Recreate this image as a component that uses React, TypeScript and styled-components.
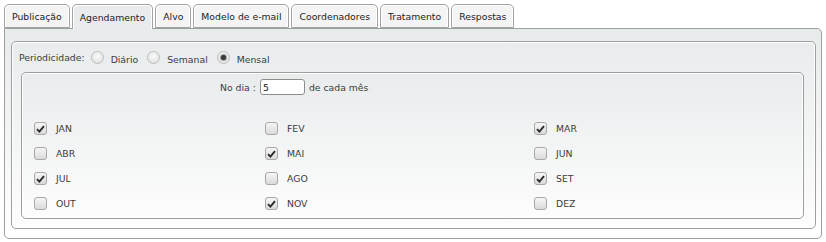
import * as React from 'react';
import styled, { createGlobalStyle } from 'styled-components';

const GlobalStyle = createGlobalStyle`
    body {
        margin: 0;
        background: #fff;
        font-family: "DejaVu Sans", Verdana, sans-serif;
        font-size: 9.3px;
        color: #3c3c3c;
    }
`;

const Page = styled.div`
    width: 818px;
    padding: 4px 4px 0 4px;
`;

const TabBar = styled.div`
    display: flex;
    align-items: flex-end;
    gap: 2px;
    height: 24px;
    position: relative;
    z-index: 1;
`;

const Tab = styled.div<{ $active?: boolean }>`
    display: flex;
    align-items: center;
    height: ${(p) => (p.$active ? '24px' : '22px')};
    margin-bottom: ${(p) => (p.$active ? '-1px' : '0')};
    padding: 0 7px;
    border: 1px solid #a3a3a3;
    border-bottom: ${(p) => (p.$active ? 'none' : '1px solid #a3a3a3')};
    border-radius: 5px 5px 0 0;
    background: ${(p) => (p.$active ? '#e9eced' : '#f4f4f4')};
    box-shadow: inset 1px 1px 0 #fff, inset -1px 0 0 #fff;
    color: #222;
    white-space: nowrap;
`;

const Panel = styled.div`
    height: 197px;
    padding: 12px 5px 0 6px;
    border: 1px solid #9e9e9e;
    border-radius: 0 5px 5px 5px;
    background: linear-gradient(#e8ebec, #ffffff);
`;

const Fieldset = styled.div`
    height: 186px;
    border: 1px solid #9e9e9e;
    border-radius: 5px;
    box-shadow: inset 0 0 0 1px #fff;
    background: linear-gradient(#e9eced, #fdfdfd);
`;

const PeriodRow = styled.div`
    display: flex;
    align-items: center;
    height: 30px;
    padding-left: 7px;
`;

const PeriodLabel = styled.span`
    margin-right: 6px;
`;

const RadioOption = styled.label`
    display: flex;
    align-items: center;
    margin-right: 9px;
`;

const Radio = styled.span<{ $checked?: boolean }>`
    box-sizing: border-box;
    width: 13px;
    height: 13px;
    border-radius: 50%;
    border: 1px solid #bdbdbd;
    background: radial-gradient(circle at 50% 40%, #fbfbfb, #dcdcdc);
    display: flex;
    align-items: center;
    justify-content: center;

    &::after {
        content: '';
        display: ${(p) => (p.$checked ? 'block' : 'none')};
        width: 5px;
        height: 5px;
        border-radius: 50%;
        background: #3a3a3a;
        box-shadow: 0 0 0 1px #a0a0a0;
    }
`;

const RadioText = styled.span`
    margin-left: 7px;
    padding-top: 4px;
`;

const InnerBox = styled.div`
    margin: 0 11px 0 9px;
    height: 145px;
    border: 1px solid #9e9e9e;
    border-radius: 5px;
    box-shadow: inset 0 0 0 1px #fff;
    background: linear-gradient(#e9eced, #fdfdfd);
`;

const DayRow = styled.div`
    display: flex;
    align-items: center;
    gap: 4px;
    padding: 6px 0 0 198px;
    height: 16px;
`;

const DayInput = styled.input`
    box-sizing: border-box;
    width: 45px;
    height: 16px;
    margin: 0;
    padding: 0 2px;
    border: 1px solid #8e8e8e;
    border-radius: 3px;
    background: #fff;
    font-family: inherit;
    font-size: inherit;
    color: #222;
`;

const MonthGrid = styled.div`
    display: grid;
    grid-template-columns: 231px 269px 1fr;
    grid-auto-rows: 25px;
    margin-top: 21px;
    padding-left: 12px;
`;

const MonthCell = styled.label`
    display: flex;
    align-items: center;
    gap: 9px;
`;

const CheckBox = styled.span`
    box-sizing: border-box;
    width: 13px;
    height: 13px;
    border: 1px solid #a8a8a8;
    border-radius: 3px;
    background: linear-gradient(#f6f6f6, #dadada);
    display: flex;
    align-items: center;
    justify-content: center;
`;

const months: [string, boolean][] = [
    ['JAN', true], ['FEV', false], ['MAR', true],
    ['ABR', false], ['MAI', true], ['JUN', false],
    ['JUL', true], ['AGO', false], ['SET', true],
    ['OUT', false], ['NOV', true], ['DEZ', false],
];

const tabs = ['Publicação', 'Agendamento', 'Alvo', 'Modelo de e-mail', 'Coordenadores', 'Tratamento', 'Respostas'];

const Check = () => (
    <svg width='9' height='8' viewBox='0 0 9 8'>
        <path d='M1 4.2 L3.4 6.6 L8 1.2' fill='none' stroke='#2a2a2a' strokeWidth='1.9' />
    </svg>
);

const App: React.FunctionComponent = () => (
    <>
        <GlobalStyle />
        <Page>
            <TabBar>
                {tabs.map((t) => (
                    <Tab key={t} $active={t === 'Agendamento'}>{t}</Tab>
                ))}
            </TabBar>
            <Panel>
                <Fieldset>
                    <PeriodRow>
                        <PeriodLabel>Periodicidade:</PeriodLabel>
                        <RadioOption><Radio /><RadioText>Diário</RadioText></RadioOption>
                        <RadioOption><Radio /><RadioText>Semanal</RadioText></RadioOption>
                        <RadioOption><Radio $checked /><RadioText>Mensal</RadioText></RadioOption>
                    </PeriodRow>
                    <InnerBox>
                        <DayRow>
                            <span>No dia :</span>
                            <DayInput defaultValue='5' />
                            <span>de cada mês</span>
                        </DayRow>
                        <MonthGrid>
                            {months.map(([m, checked]) => (
                                <MonthCell key={m}>
                                    <CheckBox>{checked && <Check />}</CheckBox>
                                    {m}
                                </MonthCell>
                            ))}
                        </MonthGrid>
                    </InnerBox>
                </Fieldset>
            </Panel>
        </Page>
    </>
);

export default App;
